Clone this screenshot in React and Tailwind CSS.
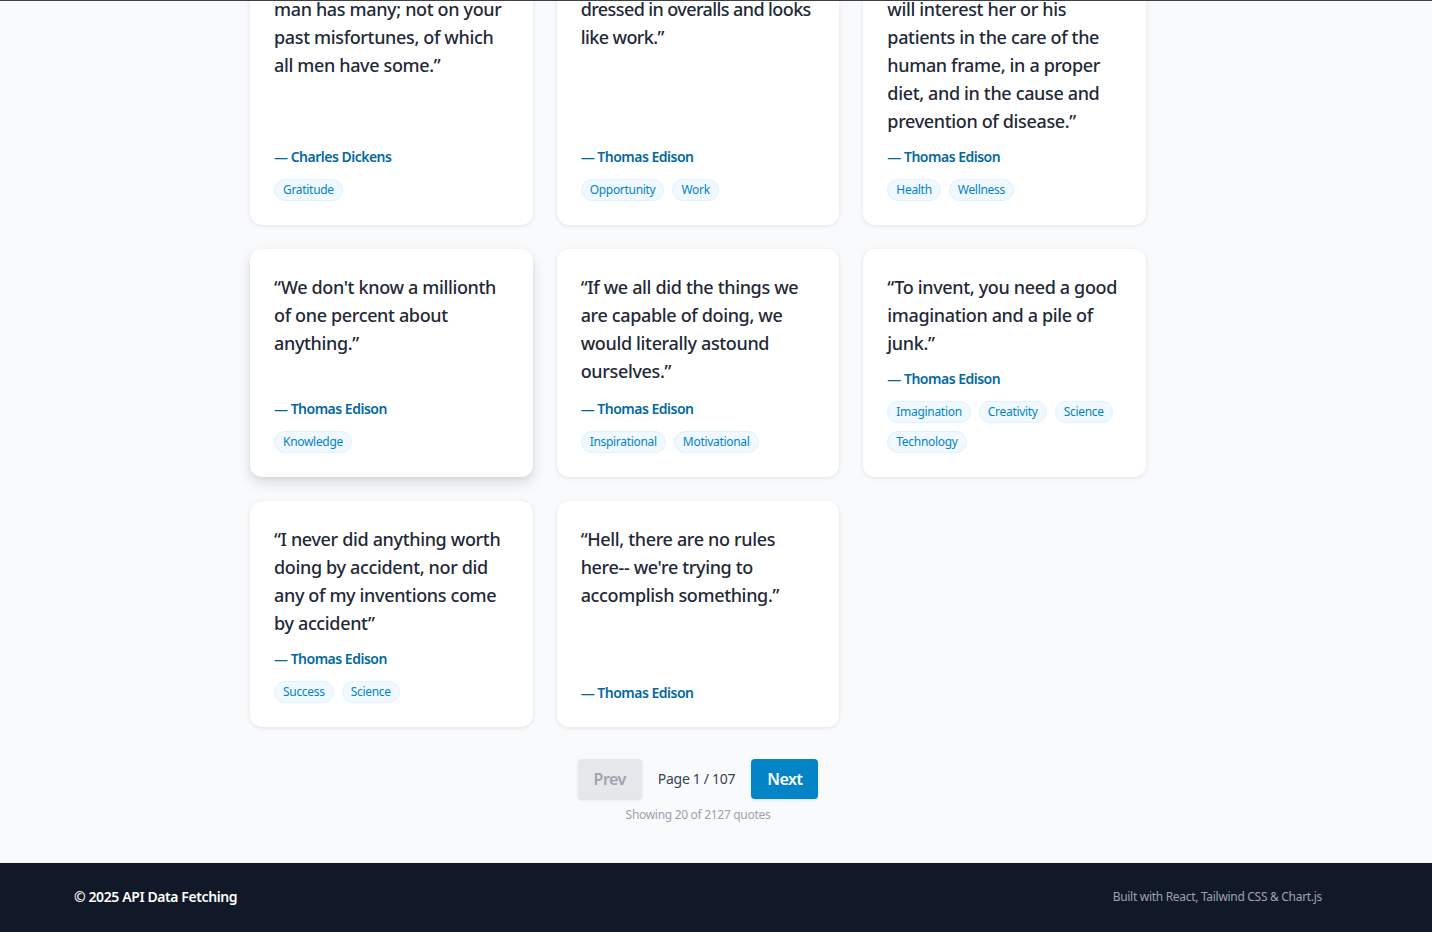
import React from "react";

const rows = [
  [
    {
      q: "Reflect upon your present blessings, of which every man has many; not on your past misfortunes, of which all men have some.",
      a: "Charles Dickens",
      t: ["Gratitude"],
    },
    {
      q: "Opportunity is missed by most people because it is dressed in overalls and looks like work.",
      a: "Thomas Edison",
      t: ["Opportunity", "Work"],
      tight: true,
    },
    {
      q: "The doctor of the future will give no medicine, but will interest her or his patients in the care of the human frame, in a proper diet, and in the cause and prevention of disease.",
      a: "Thomas Edison",
      t: ["Health", "Wellness"],
    },
  ],
  [
    {
      q: "We don't know a millionth of one percent about anything.",
      a: "Thomas Edison",
      t: ["Knowledge"],
      hover: true,
    },
    {
      q: "If we all did the things we are capable of doing, we would literally astound ourselves.",
      a: "Thomas Edison",
      t: ["Inspirational", "Motivational"],
    },
    {
      q: "To invent, you need a good imagination and a pile of junk.",
      a: "Thomas Edison",
      t: ["Imagination", "Creativity", "Science", "Technology"],
    },
  ],
  [
    {
      q: "I never did anything worth doing by accident, nor did any of my inventions come by accident",
      a: "Thomas Edison",
      t: ["Success", "Science"],
    },
    {
      q: "Hell, there are no rules here-- we're trying to accomplish something.",
      a: "Thomas Edison",
      t: [],
    },
  ],
];

function Card({ item }) {
  return (
    <div
      className={
        "flex flex-col rounded-xl bg-white p-6 " +
        (item.hover
          ? "shadow-[0_6px_14px_rgba(15,23,42,0.12),0_2px_4px_rgba(15,23,42,0.06)]"
          : "shadow-[0_1px_4px_rgba(15,23,42,0.10)]")
      }
    >
      <p
        className={
          "mb-3 flex-1 text-[18px] font-medium leading-7 text-[#1f2937] " +
          (item.tight ? "tracking-[-0.6px]" : "tracking-[-0.35px]")
        }
      >
        “{item.q}”
      </p>
      <div className="text-sm font-semibold leading-5 tracking-[-0.5px] text-[#0369a1]">— {item.a}</div>
      {item.t.length > 0 && (
        <div className="mt-3 flex flex-wrap gap-2">
          {item.t.map((tag) => (
            <span
              key={tag}
              className="rounded-full border border-[#e0f2fe] bg-[#f0f9ff] px-2 py-0.5 text-xs leading-4 tracking-[-0.3px] text-[#0284c7]"
            >
              {tag}
            </span>
          ))}
        </div>
      )}
    </div>
  );
}

export default function App() {
  return (
    <div
      className="flex h-[932px] w-full flex-col justify-end overflow-hidden border-t border-[#3f3f46] bg-[#f8fafc] text-[#1f2937]"
      style={{ fontFamily: '"Noto Sans", "Open Sans", sans-serif' }}
    >
      <main className="w-[1396px] shrink-0">
        <div className="mx-auto flex max-w-4xl flex-col gap-6 pb-10">
          {rows.map((row, i) => (
            <div key={i} className="grid grid-cols-3 gap-6">
              {row.map((item, j) => (
                <Card key={j} item={item} />
              ))}
            </div>
          ))}
          <div className="mt-2 flex flex-col items-center">
            <div className="flex items-center gap-4">
              <button className="rounded bg-[#e5e7eb] px-4 py-2 text-base font-semibold leading-6 tracking-[-0.5px] text-[#9ca3af] shadow-sm">
                Prev
              </button>
              <span className="text-sm tracking-[-0.3px] text-[#374151]">Page 1 / 107</span>
              <button className="rounded bg-[#0284c7] px-4 py-2 text-base font-semibold leading-6 tracking-[-0.5px] text-white shadow-sm">
                Next
              </button>
            </div>
            <div className="mt-2 text-xs leading-4 tracking-[-0.3px] text-[#9ca3af]">Showing 20 of 2127 quotes</div>
          </div>
        </div>
      </main>
      <footer className="w-full shrink-0 bg-[#111827]">
        <div className="w-[1396px]">
          <div className="mx-auto flex max-w-7xl items-center justify-between px-4 pb-[25px] pt-6">
            <span className="text-sm font-semibold leading-5 tracking-[-0.4px] text-white">© 2025 API Data Fetching</span>
            <span className="text-xs leading-5 tracking-[-0.3px] text-[#9ca3af]">Built with React, Tailwind CSS &amp; Chart.js</span>
          </div>
        </div>
      </footer>
    </div>
  );
}
